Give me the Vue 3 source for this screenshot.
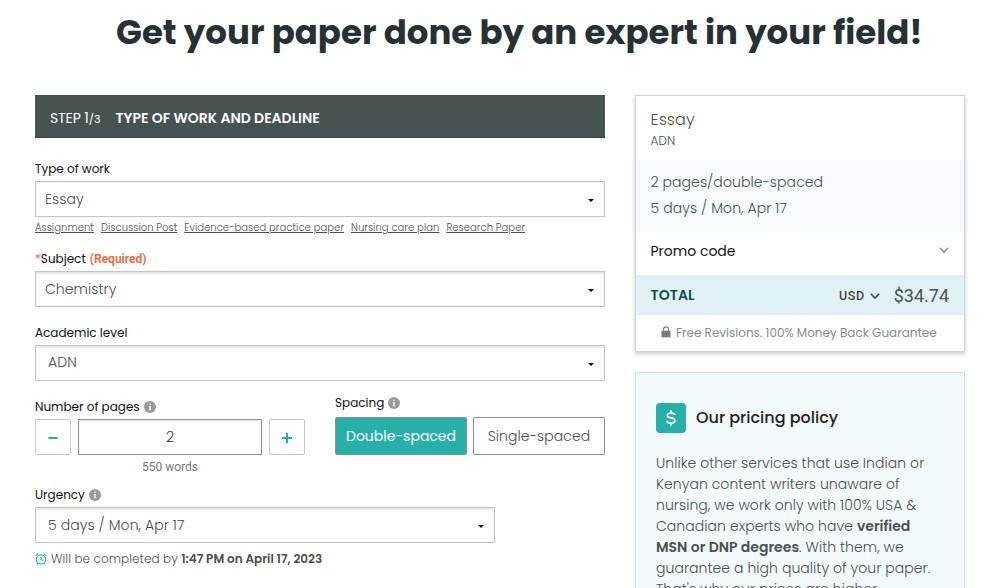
<template>
  <div class="page">
    <h1 class="title">Get your paper done by an expert in your field!</h1>

    <div class="columns">
      <form class="order" @submit.prevent>
        <div class="step">
          <div class="step-count">STEP 1<small>/3</small></div>
          <span class="step-name">TYPE OF WORK AND DEADLINE</span>
        </div>

        <!-- Type of work -->
        <label class="label label-type">Type of work</label>
        <div class="select select-flat"><span>Essay</span><i class="caret"></i></div>
        <div class="links">
          <a v-for="link in quickLinks" :key="link" href="#" @click.prevent>{{ link }}</a>
        </div>

        <!-- Subject -->
        <label class="label label-subject"><span class="star">*</span>Subject <span class="required">(Required)</span></label>
        <div class="select"><span>Chemistry</span><i class="caret"></i></div>

        <!-- Academic level -->
        <label class="label label-level">Academic level</label>
        <div class="select select-wide"><span class="level">ADN</span><i class="caret"></i></div>

        <div class="row">
          <div class="pages">
            <label class="label"><span>Number of pages</span>
              <svg class="info" viewBox="0 0 12 12"><circle cx="6" cy="6" r="6" /><path d="M5.2 2.6h1.6v1.5H5.2zM4.7 5h2.1v3.4h.6v.9H4.6v-.9h.6V5.9h-.5z" /></svg>
            </label>
            <div class="counter">
              <button class="count-btn" @click="changePages(-1)">
                <svg viewBox="0 0 12 12"><path d="M1.5 6h9" /></svg>
              </button>
              <div class="count">{{ pages }}</div>
              <button class="count-btn" @click="changePages(1)">
                <svg viewBox="0 0 12 12"><path d="M1 6h10M6 1v10" /></svg>
              </button>
            </div>
            <div class="words">{{ pages * 275 }} words</div>
          </div>

          <div class="spacing">
            <label class="label label-spacing"><span>Spacing</span>
              <svg class="info" viewBox="0 0 12 12"><circle cx="6" cy="6" r="6" /><path d="M5.2 2.6h1.6v1.5H5.2zM4.7 5h2.1v3.4h.6v.9H4.6v-.9h.6V5.9h-.5z" /></svg>
            </label>
            <div class="toggle">
              <button :class="{ active: spacing === 'double' }" @click="spacing = 'double'">Double-spaced</button>
              <button :class="{ active: spacing === 'single' }" @click="spacing = 'single'">Single-spaced</button>
            </div>
          </div>
        </div>

        <!-- Urgency -->
        <label class="label label-urgency"><span>Urgency</span>
          <svg class="info" viewBox="0 0 12 12"><circle cx="6" cy="6" r="6" /><path d="M5.2 2.6h1.6v1.5H5.2zM4.7 5h2.1v3.4h.6v.9H4.6v-.9h.6V5.9h-.5z" /></svg>
        </label>
        <div class="select select-wide select-urgency"><span>5 days / Mon, Apr 17</span><i class="caret"></i></div>
        <div class="deadline">
          <svg class="alarm" viewBox="0 0 12 12">
            <circle cx="6" cy="6.4" r="4.6" />
            <path d="M6 3.9v2.7l1.8 1M.6 2.9 2.8.9M11.4 2.9 9.2.9M2.9 9.9l-1 1.4M9.1 9.9l1 1.4" />
          </svg>
          <div>Will be completed by <b>1:47 PM on April 17, 2023</b></div>
        </div>
      </form>

      <aside class="side">
        <section class="summary">
          <div class="paper">
            <div class="paper-type">Essay</div>
            <div class="paper-level">ADN</div>
          </div>
          <div class="details">
            <div>{{ pages }} pages/{{ spacing }}-spaced</div>
            <div>5 days / Mon, Apr 17</div>
          </div>
          <div class="promo">
            <span>Promo code</span>
            <svg viewBox="0 0 12 8"><path d="M1.8 1.8 6 6l4.2-4.2" /></svg>
          </div>
          <div class="total">
            <span class="total-label">TOTAL</span>
            <span class="currency">USD</span>
            <svg viewBox="0 0 12 8"><path d="M1.8 1.8 6 6l4.2-4.2" /></svg>
            <span class="price">$34.74</span>
          </div>
          <div class="guarantee">
            <svg viewBox="0 0 10 12"><path class="lock-body" d="M.5 4.7h9v6.6h-9z" /><path class="lock-arc" d="M2.6 5V3.3a2.4 2.4 0 0 1 4.8 0V5" /></svg>
            <span>Free Revisions. 100% Money Back Guarantee</span>
          </div>
        </section>

        <section class="policy">
          <div class="policy-head">
            <span class="policy-icon">
              <svg viewBox="0 0 12 18"><path d="M9.9 6.1C9.5 4.7 8 3.9 6 3.9 3.8 3.9 2.4 4.9 2.4 6.4c0 3.6 7.5 1.4 7.5 5.2 0 1.6-1.6 2.6-3.9 2.6-2.1 0-3.7-.9-4.1-2.5M6 1.3v2.6M6 14.2v2.5" /></svg>
            </span>
            <h2>Our pricing policy</h2>
          </div>
          <p>
            Unlike other services that use Indian or<br>
            Kenyan content writers unaware of<br>
            nursing, we work only with 100% USA &amp;<br>
            Canadian experts who have <b>verified</b><br>
            <b>MSN or DNP degrees</b>. With them, we<br>
            guarantee a high quality of your paper.<br>
            That's why our prices are higher
          </p>
        </section>
      </aside>
    </div>
  </div>
</template>

<script setup>
import { ref } from 'vue'

const pages = ref(2)
const spacing = ref('double')

const quickLinks = [
  'Assignment',
  'Discussion Post',
  'Evidence-based practice paper',
  'Nursing care plan',
  'Research Paper',
]

function changePages(step) {
  pages.value = Math.max(1, pages.value + step)
}
</script>

<style>
body {
  background: #fff;
}
</style>

<style scoped>
.page {
  height: 588px;
  overflow: hidden;
  box-sizing: border-box;
  font-family: Poppins, Inter, sans-serif;
  font-size: 14px;
  font-weight: 300;
  letter-spacing: 0.08px;
  color: #4a4f50;
}
.page * {
  box-sizing: border-box;
}
b {
  font-weight: 600;
  letter-spacing: 0;
}
button {
  font: inherit;
  letter-spacing: inherit;
  padding: 0;
  background: #fff;
  cursor: pointer;
}
.title {
  margin: 0;
  height: 95px;
  padding: 6px 0 0 116px;
  font-size: 34px;
  line-height: 52px;
  font-weight: 700;
  letter-spacing: 0;
  white-space: nowrap;
  color: #263035;
}
.columns {
  display: flex;
  gap: 30px;
  padding: 0 31px 0 35px;
}
.order {
  width: 570px;
}
.step {
  display: flex;
  align-items: baseline;
  height: 43px;
  padding-left: 15px;
  line-height: 46px;
  letter-spacing: 0;
  background: #475351;
  border-bottom: 1px solid #3c4446;
  color: #fff;
  white-space: nowrap;
}
.step-count {
  width: 65.5px;
  font-weight: 400;
  letter-spacing: -0.1px;
}
.step-count small {
  font-size: 11px;
  letter-spacing: 0;
}
.step-name {
  font-weight: 600;
}

.label {
  display: flex;
  align-items: center;
  height: 20px;
  margin-bottom: 2px;
  font-size: 12px;
  line-height: 20px;
  font-weight: 400;
  letter-spacing: 0;
  color: #111;
}
.label-type {
  margin-top: 21px;
}
.label-subject {
  margin-top: 11px;
}
.label-level {
  margin-top: 16px;
}
.label-urgency {
  margin-top: 8px;
}
.label-spacing {
  margin-bottom: 4px;
}
.star {
  color: #f2694a;
}
.required {
  margin-left: 4px;
  font-family: Roboto, sans-serif;
  font-size: 12px;
  font-weight: 700;
  color: #ee6d47;
}
.info {
  width: 12px;
  height: 12px;
  margin-left: 4px;
}
.info circle {
  fill: #999;
}
.info path {
  fill: #eee;
}

.select {
  display: flex;
  align-items: center;
  justify-content: space-between;
  height: 36px;
  padding: 0 10px 0 9px;
  border: 1px solid #c3c3c6;
  box-shadow: inset 0 2px 2px #e6e6e6;
  color: #4c4c4c;
}
.select-flat {
  box-shadow: none;
}
.select-wide {
  padding-left: 12px;
}
.select-urgency {
  width: 460px;
}
.caret {
  border: 3px solid transparent;
  border-top-color: #000;
  border-bottom: 0;
  margin-top: 2px;
}
.level {
  margin-top: -1px;
}

.links {
  display: flex;
  gap: 7px;
  height: 21px;
  font-size: 10px;
  line-height: 21px;
  letter-spacing: 0.05px;
  white-space: nowrap;
}
.links a {
  color: #4c4c4c;
}

.row {
  display: flex;
  justify-content: space-between;
  margin-top: 12px;
}
.pages {
  width: 270px;
  padding-top: 4px;
}
.spacing {
  width: 270px;
}
.counter {
  display: flex;
  gap: 7px;
}
.count-btn {
  display: flex;
  align-items: center;
  justify-content: center;
  width: 36px;
  height: 36px;
  border: 1px solid #c3c7c9;
  border-radius: 2px;
}
.count-btn svg {
  width: 12px;
  height: 12px;
  margin-top: 2px;
  fill: none;
  stroke: #27a9a4;
  stroke-width: 2;
}
.count {
  width: 184px;
  height: 36px;
  border: 1px solid #8d9192;
  box-shadow: inset 0 2px 2px #ececec;
  line-height: 35px;
  text-align: center;
  color: #333;
}
.words {
  height: 22px;
  font-family: Roboto, sans-serif;
  font-size: 12px;
  font-weight: 400;
  line-height: 24px;
  letter-spacing: 0;
  text-align: center;
  color: #777;
}
.toggle {
  display: flex;
  gap: 6px;
}
.toggle button {
  width: 132px;
  height: 38px;
  border: 1px solid #8d9192;
  border-radius: 2px;
  white-space: nowrap;
  color: #4c4c4c;
}
.toggle .active {
  background: #27b0a8;
  font-weight: 400;
  letter-spacing: 0;
  color: #fff;
}

.deadline {
  display: flex;
  align-items: center;
  height: 32px;
  font-size: 12px;
  white-space: nowrap;
}
.alarm {
  width: 12px;
  height: 12px;
  margin-right: 4px;
  fill: none;
  stroke: #2bb598;
  stroke-width: 1.2;
}

.side {
  width: 330px;
}
.summary {
  height: 257px;
  border: 1px solid #cfd3d5;
  box-shadow: 0 2px 4px rgba(0, 0, 0, 0.22);
  background: #fff;
}
.paper {
  height: 64px;
  padding: 12px 14.5px 0;
}
.paper-type {
  font-size: 16px;
  line-height: 24px;
}
.paper-level {
  font-size: 12px;
  line-height: 18px;
}
.details {
  height: 72px;
  padding: 9px 14.5px 0;
  line-height: 26px;
  background: #f5fbff;
}
.promo {
  display: flex;
  align-items: center;
  justify-content: space-between;
  height: 43px;
  padding: 0 14px 4px 14.5px;
  font-weight: 400;
  letter-spacing: 0;
  color: #111;
}
.promo svg,
.total svg {
  width: 12px;
  height: 8px;
  fill: none;
  stroke: #8d9496;
  stroke-width: 1.6;
}
.promo svg {
  margin-top: -3px;
}
.total {
  display: flex;
  align-items: center;
  height: 40px;
  padding: 0 15px 0 14.5px;
  background: #e1f2f7;
}
.total svg {
  margin: 1px 13px 0 4px;
  stroke: #3f494b;
}
.total-label {
  flex: 1;
  font-weight: 600;
  letter-spacing: 0.1px;
  color: #0c4f4f;
}
.currency {
  margin-top: 1px;
  font-family: Roboto, sans-serif;
  font-size: 12.5px;
  font-weight: 500;
  letter-spacing: 0.6px;
  color: #444;
}
.price {
  font-family: Roboto, sans-serif;
  font-size: 18px;
  font-weight: 400;
  letter-spacing: 0;
  color: #47525a;
}
.guarantee {
  display: flex;
  align-items: center;
  height: 36px;
  padding-left: 25px;
  font-size: 12px;
  font-weight: 400;
  letter-spacing: 0;
  white-space: nowrap;
  color: #848c8e;
}
.guarantee svg {
  width: 10px;
  height: 12px;
  margin: -2px 5px 0 0;
}
.lock-body {
  fill: #727b7d;
}
.lock-arc {
  fill: none;
  stroke: #727b7d;
  stroke-width: 1.1;
}

.policy {
  height: 300px;
  margin-top: 20px;
  padding: 30px 20px 0;
  border: 1px solid #c5e9e0;
  background: #f2fafb;
}
.policy-head {
  display: flex;
  align-items: center;
  gap: 10px;
}
.policy-icon {
  display: flex;
  align-items: center;
  justify-content: center;
  width: 30px;
  height: 30px;
  border-radius: 4px;
  background: #27b0a8;
}
.policy-icon svg {
  width: 12px;
  height: 18px;
  fill: none;
  stroke: #fff;
  stroke-width: 1.7;
}
.policy h2 {
  margin: -2px 0 0;
  font-size: 16px;
  font-weight: 500;
  letter-spacing: 0;
  color: #222;
}
.policy p {
  margin: 20px 0 0;
  line-height: 21px;
  letter-spacing: 0.06px;
  white-space: nowrap;
}
</style>
